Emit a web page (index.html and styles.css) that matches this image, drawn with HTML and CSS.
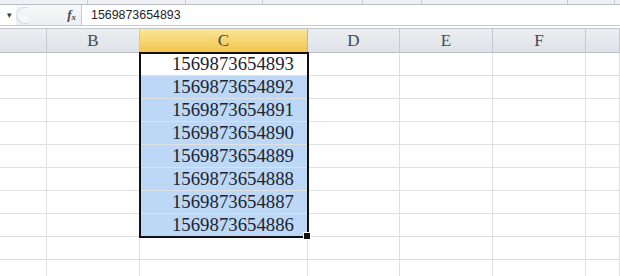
FILE: index.html
```html
<!DOCTYPE html>
<html lang="zh">
<head>
    <meta charset="UTF-8">
    <title>Sheet1</title>
    <link rel="stylesheet" href="styles.css">
</head>
<body>
    <div class="ribbon-edge">
        <span class="seg" style="width:88px"></span>
        <span class="seg" style="width:98px"></span>
        <span class="seg" style="width:77px"></span>
        <span class="seg" style="width:100px"></span>
        <span class="seg" style="width:59px"></span>
        <span class="seg" style="width:146px"></span>
        <span class="seg" style="width:47px"></span>
    </div>

    <div class="formula-bar">
        <div class="name-box">
            <span class="arrow">▾</span>
        </div>
        <div class="fx-area">
            <span class="ghost-btn"></span>
            <span class="fx"><i>f</i><sub>x</sub></span>
        </div>
        <div class="formula-input">1569873654893</div>
    </div>

    <div class="sheet">
        <div class="hd"></div>
        <div class="hd">B</div>
        <div class="hd hd-active">C</div>
        <div class="hd">D</div>
        <div class="hd">E</div>
        <div class="hd">F</div>
        <div class="hd"></div>

        <div class="cell"></div><div class="cell"></div><div class="cell num">1569873654893</div><div class="cell"></div><div class="cell"></div><div class="cell"></div><div class="cell"></div>
        <div class="cell"></div><div class="cell"></div><div class="cell num sel">1569873654892</div><div class="cell"></div><div class="cell"></div><div class="cell"></div><div class="cell"></div>
        <div class="cell"></div><div class="cell"></div><div class="cell num sel">1569873654891</div><div class="cell"></div><div class="cell"></div><div class="cell"></div><div class="cell"></div>
        <div class="cell"></div><div class="cell"></div><div class="cell num sel">1569873654890</div><div class="cell"></div><div class="cell"></div><div class="cell"></div><div class="cell"></div>
        <div class="cell"></div><div class="cell"></div><div class="cell num sel">1569873654889</div><div class="cell"></div><div class="cell"></div><div class="cell"></div><div class="cell"></div>
        <div class="cell"></div><div class="cell"></div><div class="cell num sel">1569873654888</div><div class="cell"></div><div class="cell"></div><div class="cell"></div><div class="cell"></div>
        <div class="cell"></div><div class="cell"></div><div class="cell num sel">1569873654887</div><div class="cell"></div><div class="cell"></div><div class="cell"></div><div class="cell"></div>
        <div class="cell"></div><div class="cell"></div><div class="cell num sel">1569873654886</div><div class="cell"></div><div class="cell"></div><div class="cell"></div><div class="cell"></div>
        <div class="cell"></div><div class="cell"></div><div class="cell"></div><div class="cell"></div><div class="cell"></div><div class="cell"></div><div class="cell"></div>
        <div class="cell"></div><div class="cell"></div><div class="cell"></div><div class="cell"></div><div class="cell"></div><div class="cell"></div><div class="cell"></div>

        <div class="selection"></div>
    </div>
</body>
</html>
```

FILE: styles.css
```css
/* ====== base ====== */
* {
    margin: 0;
    padding: 0;
    box-sizing: border-box;
}
body {
    width: 620px;
    height: 276px;
    overflow: hidden;
    background: #fff;
    font-family: 'Liberation Sans', Arial, sans-serif;
}

/* ====== ribbon edge ====== */
.ribbon-edge {
    display: flex;
    height: 5px;
    background: #eef0f3;
    border-bottom: 1px solid #b9bec6;
}
.ribbon-edge .seg {
    height: 4px;
    border-right: 1px solid #c9cdd3;
}

/* ====== formula bar ====== */
.formula-bar {
    display: flex;
    height: 21px;
    background: #fff;
    border-bottom: 1px solid #c6cbd2;
}
.name-box {
    width: 16px;
    display: flex;
    align-items: center;
    justify-content: center;
}
.arrow {
    font-size: 9px;
    color: #3c3c3c;
    margin-left: 2px;
}
.fx-area {
    width: 66px;
    display: flex;
    align-items: center;
    justify-content: space-between;
    padding-right: 5px;
    background: linear-gradient(#f7f8fa, #eceef1);
    border-right: 1px solid #c6cbd2;
}
.ghost-btn {
    width: 12px;
    height: 17px;
    border: 1px solid #d7dbe0;
    border-right: none;
    border-radius: 9px 0 0 9px;
    background: #f4f5f7;
}
.fx {
    font-family: 'Liberation Serif', serif;
    font-size: 13px;
    color: #4a4a4a;
    font-weight: bold;
}
.fx sub {
    font-size: 9px;
    font-style: italic;
    vertical-align: -1px;
}
.formula-input {
    flex: 1;
    padding-left: 9px;
    font-size: 12.4px;
    line-height: 21px;
    color: #1e1e1e;
}

/* ====== sheet ====== */
.sheet {
    position: relative;
    display: grid;
    grid-template-columns: 47px 93px 168px 92px 93px 93px 1fr;
    grid-template-rows: 24px repeat(10, 23px);
    margin-top: 2px;
    border-top: 1px solid #c2c7ce;
}
.hd {
    background: linear-gradient(#eceef1, #dfe2e7);
    border-right: 1px solid #c4c9d0;
    border-bottom: 1px solid #b9bec6;
    font-family: 'Liberation Serif', serif;
    font-size: 17px;
    color: #444a52;
    text-align: center;
    line-height: 23px;
}
.hd-active {
    background: linear-gradient(#fbe59a, #f3c64a);
    border-right-color: #e0b444;
    border-bottom-color: #e0b444;
}
.cell {
    border-right: 1px solid #dfe0e2;
    border-bottom: 1px solid #dfe0e2;
}
.num {
    font-family: 'Liberation Serif', serif;
    font-size: 18.8px;
    color: #1d2330;
    text-align: right;
    padding-right: 13px;
    line-height: 22px;
}
.sel {
    background: #bcd8f6;
}

/* selection frame drawn over C2:C9 */
.selection {
    position: absolute;
    grid-column: 3 / 4;
    grid-row: 2 / 10;
    top: -1px;
    left: -1px;
    right: -1px;
    bottom: -1px;
    border: 2px solid #111;
    pointer-events: none;
}
.selection::after {
    content: "";
    position: absolute;
    right: -4px;
    bottom: -4px;
    width: 6px;
    height: 6px;
    background: #111;
    border: 1px solid #fff;
}
```
